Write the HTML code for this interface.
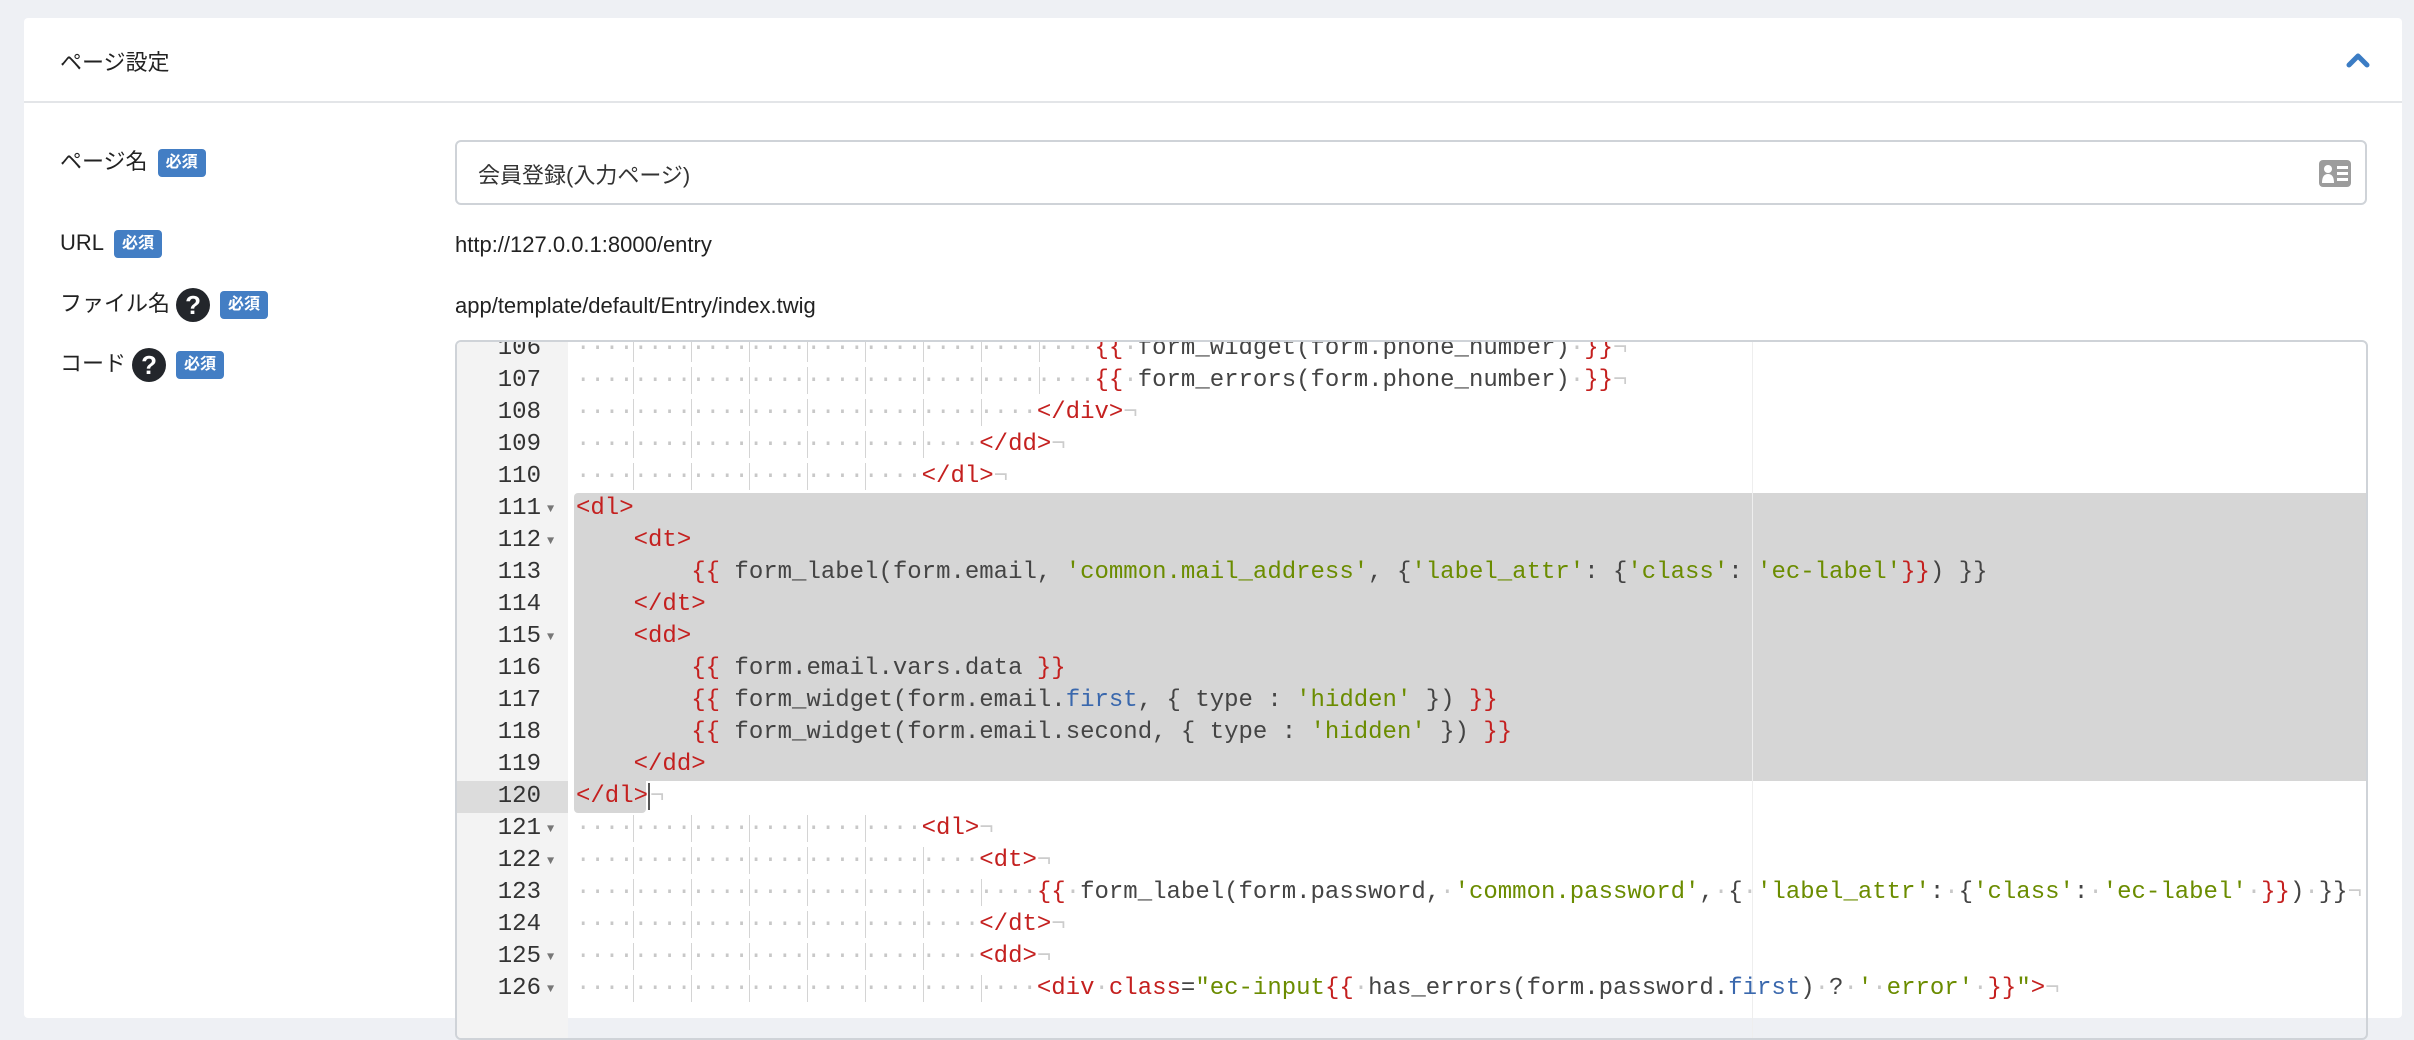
<!DOCTYPE html>
<html><head><meta charset="utf-8"><style>
*{margin:0;padding:0;box-sizing:border-box}
body{width:2414px;height:1006px;overflow:hidden;background:#eef0f4;font-family:"Liberation Sans","Noto Sans CJK JP",sans-serif;color:#222;position:relative}
.card{position:absolute;left:24px;top:18px;width:2378px;height:1000px;background:#fff;border-radius:4px}
.hdr{position:absolute;left:0;top:0;width:100%;height:85px;border-bottom:2px solid #e3e5e8}
.abs{position:absolute;white-space:nowrap}
.lbl{font-size:22px;line-height:30px}
.badge{display:inline-block;background:#437ec4;color:#fff;font-weight:bold;font-size:16px;line-height:28px;height:28px;padding:0 8px;border-radius:4px;vertical-align:middle;margin-left:10px}
.q{display:inline-block;width:34px;height:34px;border-radius:50%;background:#23262b;color:#fff;font-weight:bold;font-size:26px;line-height:34px;text-align:center;vertical-align:middle;margin-left:6px}
.input{position:absolute;left:431px;top:122px;width:1912px;height:65px;border:2px solid #cfd3d8;border-radius:6px}
.code{position:absolute;left:431px;top:322px;width:1913px;height:700px;border:2px solid #cfd3d8;border-radius:6px;overflow:hidden;font-family:"Liberation Mono",monospace;font-size:24px}
.gut{position:absolute;left:0;top:0;width:111px;height:100%;background:#f3f3f3}
.ln{position:absolute;left:0;height:32px;line-height:32px;width:100%}
.num{position:absolute;left:0;width:84px;text-align:right;color:#333}
.fold{position:absolute;left:90px;top:0;color:#777;font-size:12px}
.txt{position:absolute;left:119px;color:#444;white-space:pre}
.t{color:#c4201f}.s{color:#6b8c00}.b{color:#3a68ad}.e{color:#ccc}
.d{color:#c8c8c8;background:repeating-linear-gradient(to right,transparent 0 57px,#d4d4d4 57px 58px,transparent 58px 57.6px)}
.hl{position:absolute;left:117px;width:1800px;background:#d6d6d6}
.pm{position:absolute;left:1295px;top:0;width:1px;height:100%;background:#eee}
</style></head><body>
<div class="card">
 <div class="hdr">
  <div class="abs lbl" style="left:36px;top:30px">ページ設定</div>
  <svg class="abs" style="left:2322px;top:34px" width="24" height="16" viewBox="0 0 24 16"><path d="M3 13 L12 4 L21 13" fill="none" stroke="#3b7cc4" stroke-width="5" stroke-linecap="round" stroke-linejoin="round"/></svg>
 </div>
 <div class="abs lbl" style="left:36px;top:129px">ページ名<span class="badge">必須</span></div>
 <div class="input">
  <div class="abs" style="left:21px;top:16px;font-size:22px;color:#333">会員登録(入力ページ)</div>
  <svg class="abs" style="left:1862px;top:18px" width="32" height="27" viewBox="0 0 32 27"><rect x="0" y="0" width="32" height="27" rx="4" fill="#9c9c9c"/><circle cx="9" cy="9" r="4" fill="#fff"/><path d="M3 23 Q3 14 9 14 Q15 14 15 23 Z" fill="#fff"/><rect x="18" y="6" width="11" height="3" fill="#fff"/><rect x="18" y="12" width="11" height="3" fill="#fff"/><rect x="18" y="18" width="11" height="3" fill="#fff"/></svg>
 </div>
 <div class="abs lbl" style="left:36px;top:210px">URL<span class="badge">必須</span></div>
 <div class="abs lbl" style="left:431px;top:212px;color:#222">http://127.0.0.1:8000/entry</div>
 <div class="abs lbl" style="left:36px;top:270px">ファイル名<span class="q">?</span><span class="badge">必須</span></div>
 <div class="abs lbl" style="left:431px;top:273px">app/template/default/Entry/index.twig</div>
 <div class="abs lbl" style="left:36px;top:330px">コード<span class="q">?</span><span class="badge">必須</span></div>
 <div class="code">
  <div class="gut"></div>
  <div class="hl" style="top:151px;height:288px;border-radius:4px 4px 0 0"></div>
  <div class="hl" style="top:439px;height:32px;width:72px;border-radius:0 0 4px 4px"></div>
  <div class="ln" style="top:439px;width:111px;background:#dcdcdc"></div>
  <div class="pm"></div>
  <div class="ln" style="top:-9px"><span class="num">106</span><span class="txt"><span class="d">····································</span><span class="t">{{</span><span class="d">·</span>form_widget(form.phone_number)<span class="d">·</span><span class="t">}}</span><span class="e">¬</span></span></div>
  <div class="ln" style="top:23px"><span class="num">107</span><span class="txt"><span class="d">····································</span><span class="t">{{</span><span class="d">·</span>form_errors(form.phone_number)<span class="d">·</span><span class="t">}}</span><span class="e">¬</span></span></div>
  <div class="ln" style="top:55px"><span class="num">108</span><span class="txt"><span class="d">································</span><span class="t">&lt;/div&gt;</span><span class="e">¬</span></span></div>
  <div class="ln" style="top:87px"><span class="num">109</span><span class="txt"><span class="d">····························</span><span class="t">&lt;/dd&gt;</span><span class="e">¬</span></span></div>
  <div class="ln" style="top:119px"><span class="num">110</span><span class="txt"><span class="d">························</span><span class="t">&lt;/dl&gt;</span><span class="e">¬</span></span></div>
  <div class="ln" style="top:151px"><span class="num">111</span><span class="fold">▼</span><span class="txt"><span class="t">&lt;dl&gt;</span></span></div>
  <div class="ln" style="top:183px"><span class="num">112</span><span class="fold">▼</span><span class="txt">    <span class="t">&lt;dt&gt;</span></span></div>
  <div class="ln" style="top:215px"><span class="num">113</span><span class="txt">        <span class="t">{{</span> form_label(form.email, <span class="s">'common.mail_address'</span>, {<span class="s">'label_attr'</span>: {<span class="s">'class'</span>: <span class="s">'ec-label'</span><span class="t">}}</span>) }}</span></div>
  <div class="ln" style="top:247px"><span class="num">114</span><span class="txt">    <span class="t">&lt;/dt&gt;</span></span></div>
  <div class="ln" style="top:279px"><span class="num">115</span><span class="fold">▼</span><span class="txt">    <span class="t">&lt;dd&gt;</span></span></div>
  <div class="ln" style="top:311px"><span class="num">116</span><span class="txt">        <span class="t">{{</span> form.email.vars.data <span class="t">}}</span></span></div>
  <div class="ln" style="top:343px"><span class="num">117</span><span class="txt">        <span class="t">{{</span> form_widget(form.email.<span class="b">first</span>, { type : <span class="s">'hidden'</span> }) <span class="t">}}</span></span></div>
  <div class="ln" style="top:375px"><span class="num">118</span><span class="txt">        <span class="t">{{</span> form_widget(form.email.second, { type : <span class="s">'hidden'</span> }) <span class="t">}}</span></span></div>
  <div class="ln" style="top:407px"><span class="num">119</span><span class="txt">    <span class="t">&lt;/dd&gt;</span></span></div>
  <div class="ln" style="top:439px"><span class="num">120</span><span class="txt"><span class="t">&lt;/dl&gt;</span><span style="border-left:2px solid #555"></span><span class="e">¬</span></span></div>
  <div class="ln" style="top:471px"><span class="num">121</span><span class="fold">▼</span><span class="txt"><span class="d">························</span><span class="t">&lt;dl&gt;</span><span class="e">¬</span></span></div>
  <div class="ln" style="top:503px"><span class="num">122</span><span class="fold">▼</span><span class="txt"><span class="d">····························</span><span class="t">&lt;dt&gt;</span><span class="e">¬</span></span></div>
  <div class="ln" style="top:535px"><span class="num">123</span><span class="txt"><span class="d">································</span><span class="t">{{</span><span class="d">·</span>form_label(form.password,<span class="d">·</span><span class="s">'common.password'</span>,<span class="d">·</span>{<span class="d">·</span><span class="s">'label_attr'</span>:<span class="d">·</span>{<span class="s">'class'</span>:<span class="d">·</span><span class="s">'ec-label'</span><span class="d">·</span><span class="t">}}</span>)<span class="d">·</span>}}<span class="e">¬</span></span></div>
  <div class="ln" style="top:567px"><span class="num">124</span><span class="txt"><span class="d">····························</span><span class="t">&lt;/dt&gt;</span><span class="e">¬</span></span></div>
  <div class="ln" style="top:599px"><span class="num">125</span><span class="fold">▼</span><span class="txt"><span class="d">····························</span><span class="t">&lt;dd&gt;</span><span class="e">¬</span></span></div>
  <div class="ln" style="top:631px"><span class="num">126</span><span class="fold">▼</span><span class="txt"><span class="d">································</span><span class="t">&lt;div</span><span class="d">·</span><span class="t">class</span>=<span class="s">"ec-input</span><span class="t">{{</span><span class="d">·</span>has_errors(form.password.<span class="b">first</span>)<span class="d">·</span>?<span class="d">·</span><span class="s">'</span><span class="d">·</span><span class="s">error'</span><span class="d">·</span><span class="t">}}</span><span class="s">"</span><span class="t">&gt;</span><span class="e">¬</span></span></div>
 </div>
</div>
</body></html>
